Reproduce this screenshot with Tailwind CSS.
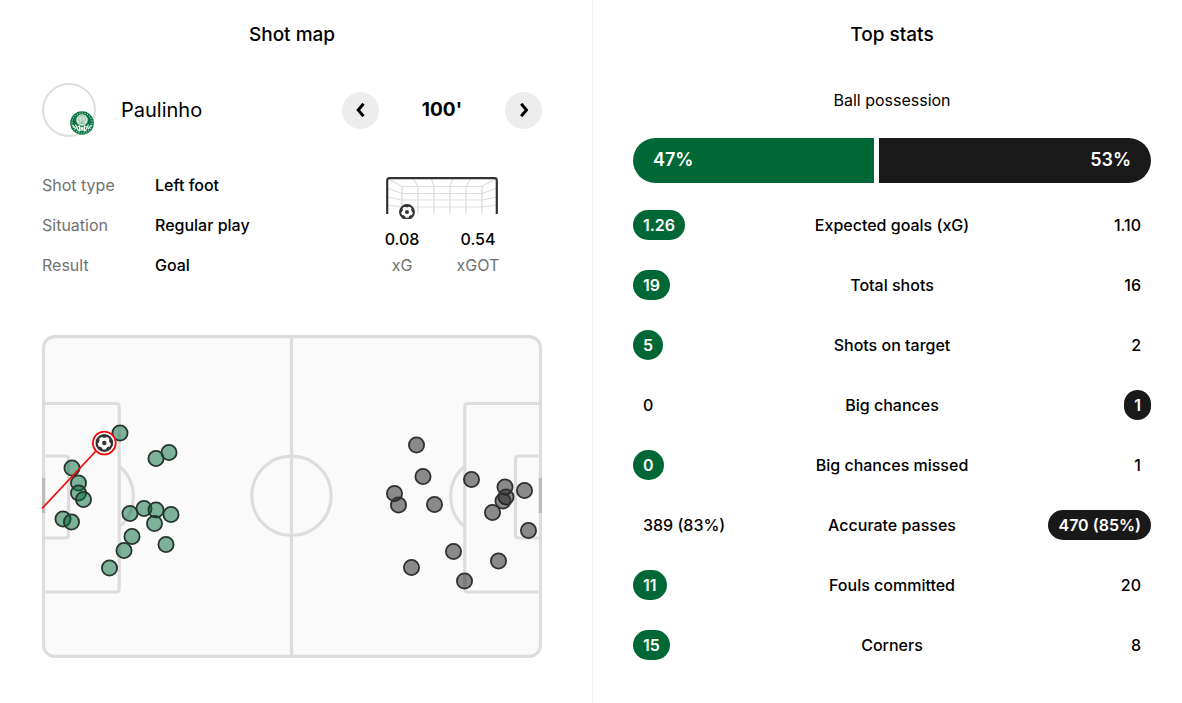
<!DOCTYPE html>
<html lang="en">
<head>
    <meta charset="UTF-8">
    <meta name="viewport" content="width=device-width, initial-scale=1.0">
    <title>Shot map and top stats</title>
    <script src="https://cdn.jsdelivr.net/npm/@tailwindcss/browser@4"></script>
</head>
<body class="bg-white text-black font-['Inter',sans-serif] text-base">

    <svg class="hidden" aria-hidden="true">
        <symbol id="ball" viewBox="-8 -8 16 16">
            <circle r="6.9" fill="#fff" stroke="#333" stroke-width="2.1"/>
            <circle r="2" fill="#333"/>
            <g fill="#333">
                <path id="patch" d="M-2.6 -6.4H2.6L1.2 -4.7H-1.2Z"/>
                <use href="#patch" transform="rotate(72)"/>
                <use href="#patch" transform="rotate(144)"/>
                <use href="#patch" transform="rotate(216)"/>
                <use href="#patch" transform="rotate(288)"/>
            </g>
        </symbol>
    </svg>

    <main class="grid grid-cols-[593fr_589fr] min-h-screen">

        <!-- Shot map -->
        <section class="border-r border-[#f5f5f5] pl-[42px] pr-[50px] pt-[21px] pb-11">
            <h2 class="text-center text-[19px] leading-7 font-medium">Shot map</h2>

            <div class="mt-[34px] flex items-center justify-between">
                <div class="flex items-center gap-[25px]">
                    <div class="relative size-[54px] rounded-full border-2 border-[#ddd]">
                        <svg class="absolute right-0 bottom-0 size-6" viewBox="0 0 24 24" role="img" aria-label="Palmeiras">
                            <circle cx="12" cy="12" r="11.8" fill="#0b7443"/>
                            <circle cx="12" cy="12" r="10" fill="none" stroke="#b5d6c4" stroke-width="1.2" stroke-dasharray="1 1.6"/>
                            <circle cx="12" cy="9" r="5.8" fill="#d5e6dc"/>
                            <circle cx="12" cy="8" r="3.4" fill="none" stroke="#8fbda3"/>
                            <path d="M9 12.5h6M12 6v5" stroke="#8fbda3"/>
                            <path d="M2.5 14l3.5 4M5.5 13.5l3 6.500M7.500 16l2-1v5.500M11 20v-4l1 2 1-2v4M14.500 20.500V15l2 1M18.500 13.500l-3 6.500M21.500 14L18 18" fill="none" stroke="#eef6f1" stroke-width="1.2"/>
                        </svg>
                    </div>
                    <span class="text-xl">Paulinho</span>
                </div>
                <div class="flex w-[200px] items-center justify-between">
                    <button type="button" aria-label="Previous shot" class="flex size-[37px] items-center justify-center rounded-full bg-[#ededed]">
                        <svg class="h-[14px] w-[10px]" viewBox="0 0 10 14" fill="none" stroke="#000" stroke-width="3"><path d="M7.5 .8L2.2 7l5.300 6.200"/></svg>
                    </button>
                    <span class="text-[19px] font-bold">100'</span>
                    <button type="button" aria-label="Next shot" class="flex size-[37px] items-center justify-center rounded-full bg-[#ededed]">
                        <svg class="h-[14px] w-[10px]" viewBox="0 0 10 14" fill="none" stroke="#000" stroke-width="3"><path d="M3.200 .8L8.500 7l-5.300 6.200"/></svg>
                    </button>
                </div>
            </div>

            <div class="mt-7 flex justify-between">
                <dl class="grid grid-cols-[113px_auto] leading-10">
                    <dt class="text-[#717171]">Shot type</dt><dd class="font-medium">Left foot</dd>
                    <dt class="text-[#717171]">Situation</dt><dd class="font-medium">Regular play</dd>
                    <dt class="text-[#717171]">Result</dt><dd class="font-medium">Goal</dd>
                </dl>
                <div class="mr-[22px] flex w-[156px] flex-col items-center pt-3">
                    <svg class="w-[112px]" viewBox="0 0 112 42" fill="none" role="img" aria-label="Shot placement in goal">
                        <g stroke="#ddd" stroke-width="1.2">
                            <path d="M1 1L16 9.5H96L111 1M16 16.5H96M16 23H96M16 30H96"/>
                            <path d="M1 11l15 5.5M1 20l15 3M1 28l15 2M111 11l-15 5.5M111 20l-15 3M111 28l-15 2"/>
                            <path d="M16 9.5V37M27 1l5 8.5V37M45 1l3 8.5V37M67 1l-3 8.5V37M85 1l-5 8.5V37M96 9.5V37"/>
                        </g>
                        <path d="M1.2 37V3.5Q1.2 1.2 3.5 1.2H108.5Q110.8 1.2 110.8 3.5V37" stroke="#333" stroke-width="2.2"/>
                        <use href="#ball" x="13" y="27" width="16" height="16"/>
                    </svg>
                    <dl class="mt-[7px] grid w-full grid-cols-2 pr-1 text-center leading-[26px]">
                        <div class="flex flex-col-reverse"><dt class="text-[#717171]">xG</dt><dd class="font-medium">0.08</dd></div>
                        <div class="flex flex-col-reverse"><dt class="text-[#717171]">xGOT</dt><dd class="font-medium">0.54</dd></div>
                    </dl>
                </div>
            </div>

            <svg class="mt-[50px] w-full overflow-visible" viewBox="0 0 500 323" fill="none" role="img" aria-label="Pitch with all shots">
                <g stroke="#ddd" stroke-width="3.2">
                    <rect x="1.6" y="1.6" width="496.8" height="319.8" rx="11" fill="#fafafa"/>
                    <path d="M249.5 2V321"/>
                    <circle cx="249.5" cy="160.8" r="39.7"/>
                    <path d="M2 68.5H74Q77.2 68.5 77.2 71.7V254Q77.2 257 74 257H2"/>
                    <path d="M2 121H23.5Q26.5 121 26.5 124V200Q26.5 203 23.5 203H2"/>
                    <path d="M77.2 131A40 40 0 0 1 77.2 192"/>
                    <path d="M498 68.5H426Q422.8 68.5 422.8 71.7V254Q422.8 257 426 257H498"/>
                    <path d="M498 121H476.5Q473.5 121 473.5 124V200Q473.5 203 476.500 203H498"/>
                    <path d="M422.8 131A40 40 0 0 0 422.8 192"/>
                </g>
                <path d="M1.6 143V178M498.4 143V178" stroke="#bbb" stroke-width="3.2"/>
                <g id="shots" stroke-width="1.8"></g>
                <path d="M0 173.500L54 116" stroke="#ee0a0a" stroke-width="1.8"/>
                <circle cx="62.300" cy="108" r="11.400" fill="#fff" stroke="#ee0a0a" stroke-width="1.8"/>
                <use href="#ball" x="53.300" y="99" width="18" height="18"/>
            </svg>
        </section>

        <!-- Top stats -->
        <section class="pl-10 pr-[31px] pt-[21px]">
            <h2 class="text-center text-[19px] leading-7 font-medium">Top stats</h2>

            <h3 class="mt-[39px] text-center leading-6">Ball possession</h3>
            <div class="mt-[26px] flex h-[45px] gap-[5px] overflow-hidden rounded-full text-lg leading-[43px] font-semibold text-white">
                <div class="bg-[#006837] px-5" style="width: 47%">47%</div>
                <div class="bg-[#191919] px-5 text-right" style="width: 53%">53%</div>
            </div>

            <table class="mt-3 w-full table-fixed">
                <tbody id="stats"></tbody>
            </table>
        </section>
    </main>

    <script>
        const homeShots = [
            [78, 98], [127, 117.5], [114, 123.5], [30, 133], [36.5, 148], [36.5, 158], [41.5, 164.5], [21, 184], [29.5, 187],
            [88, 178.5], [102, 173.5], [114, 175], [129, 179.5], [112.5, 188.5], [90, 201.5], [82, 215.5], [124, 209.5], [67.5, 233]
        ];
        const awayShots = [
            [374.5, 110], [381, 141.5], [352.5, 158.5], [356.5, 170], [392.5, 169.5], [429.5, 144.5], [463, 152], [464, 162],
            [461, 166], [482.5, 155.5], [450.5, 177.5], [486.5, 195.5], [411.5, 216.5], [369.5, 232.5], [456.5, 226], [422.5, 246]
        ];
        const dot = (color, stroke) => ([x, y]) => `<circle cx="${x}" cy="${y}" r="7.6" fill="${color}" fill-opacity="0.5" stroke="${stroke}"/>`;
        document.getElementById('shots').innerHTML = homeShots.map(dot('#006837', '#26352e')).join('') + awayShots.map(dot('#191919', '#303030')).join('');

        const stats = [
            ['1.26', 'Expected goals (xG)', '1.10', 'home'],
            ['19', 'Total shots', '16', 'home'],
            ['5', 'Shots on target', '2', 'home'],
            ['0', 'Big chances', '1', 'away'],
            ['0', 'Big chances missed', '1', 'home'],
            ['389 (83%)', 'Accurate passes', '470 (85%)', 'away'],
            ['11', 'Fouls committed', '20', 'home'],
            ['15', 'Corners', '8', 'home']
        ];
        const pill = (text, color) => `<span class="inline-block rounded-full px-[10px] leading-[30px] ${color ? color + ' font-semibold text-white' : 'font-medium'}">${text}</span>`;
        document.getElementById('stats').innerHTML = stats.map(([home, label, away, best]) => `
            <tr class="h-[60px]">
                <td class="w-[30%] p-0 text-left">${pill(home, best === 'home' && 'bg-[#006837]')}</td>
                <th scope="row" class="p-0 text-center font-medium">${label}</th>
                <td class="w-[30%] p-0 text-right">${pill(away, best === 'away' && 'bg-[#191919]')}</td>
            </tr>`).join('');
    </script>
</body>
</html>
